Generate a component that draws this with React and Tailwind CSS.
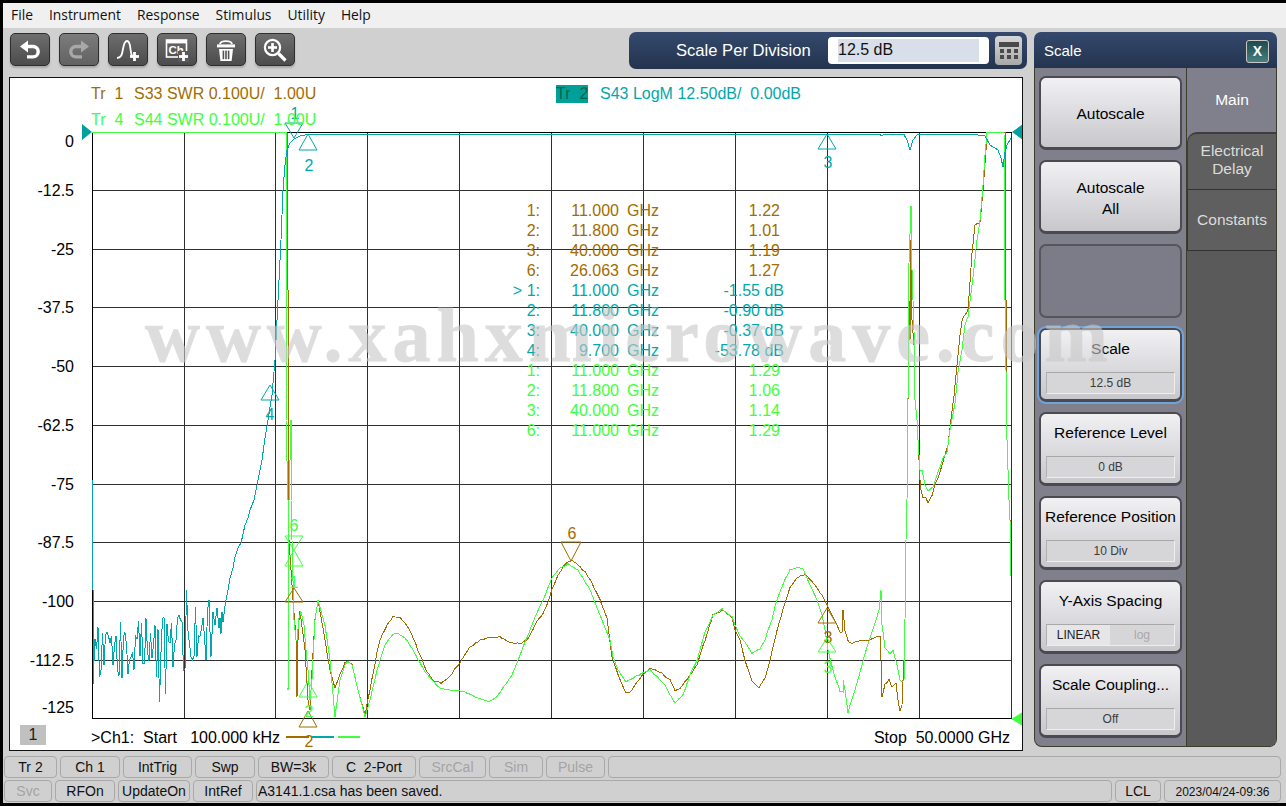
import React from 'react';

const BROWN = '#a26c00', TEAL = '#00a8ac', GREEN = '#40ff40';
const GX = [92, 184, 275, 367, 459, 551, 643, 735, 827, 919, 1011];
const GY = [132, 190, 249, 307, 366, 425, 484, 542, 601, 660, 718];
const AXIS = [['0', 141], ['-12.5', 190], ['-25', 249], ['-37.5', 307], ['-50', 366], ['-62.5', 425], ['-75', 484], ['-87.5', 542], ['-100', 601], ['-112.5', 660], ['-125', 707]];

function rng(seed) {
  let s = seed;
  return () => {
    s = (s * 16807) % 2147483647;
    return (s - 1) / 2147483646;
  };
}
function rough(pts, seed, amt) {
  const r = rng(seed);
  const out = [];
  for (let i = 0; i < pts.length - 1; i++) {
    const [x0, y0] = pts[i];
    const [x1, y1] = pts[i + 1];
    const n = Math.max(1, Math.floor(Math.abs(x1 - x0) / 2));
    const gentle = Math.abs(x1 - x0) >= 3 && y0 !== y1;
    for (let k = 0; k < n; k++) {
      const t = k / n;
      const j = gentle ? (r() - 0.5) * amt : 0;
      out.push([x0 + (x1 - x0) * t, y0 + (y1 - y0) * t + j]);
    }
  }
  out.push(pts[pts.length - 1]);
  return out;
}
const str = (p) => p.map(([x, y]) => `${x.toFixed(1)},${y.toFixed(1)}`).join(' ');

function tealTrace() {
  const r = rng(4711);
  const p = [[93, 590], [93, 684]];
  for (let x = 95; x < 211; x += 1.5) {
    const shift = x > 170 ? (x - 170) * 0.4 : 0;
    const spike = r();
    const big = r();
    let y = 648 - shift + (r() - 0.5) * 62;
    if (spike > 0.88) y += 18 + big * 24;
    if (spike < 0.12) y -= 8 + big * 16;
    p.push([x, y]);
  }
  p.push([211, 657], [213, 612], [215, 625], [217, 608], [219, 628], [220, 618], [221, 634], [222, 612], [223, 622], [225, 606], [226, 600],
    [228, 590], [230, 578], [233, 568], [235, 557], [238, 548], [241, 543], [245, 525], [248, 518], [250, 510], [254, 500], [258, 480], [262, 460], [265, 438], [268, 420], [272, 395], [275, 360], [278, 300], [281, 240], [283, 190], [285, 165], [287, 150], [290, 143], [294, 139], [300, 136], [305, 135], [362, 134.5],
    [880, 134.5], [882, 136], [884, 134.5], [904, 134.5], [907, 140], [910, 150], [913, 140], [917, 135], [920, 134.5], [975, 134.5], [985, 136], [990, 145], [998, 150], [1001, 158], [1003, 167], [1005, 152], [1007, 145], [1011, 138]);
  return p;
}

const BROWN_PTS = [[287, 132.5], [287, 280], [288, 290], [288, 440], [289, 540], [291, 570], [293, 600], [295, 625], [296, 640], [297, 697], [298, 640], [299, 620], [300, 612], [305, 650], [308, 700], [310, 710], [312, 670], [315, 620], [318, 600], [325, 640], [330, 670], [335, 687], [340, 675], [345, 662], [348, 661], [352, 665], [358, 690], [365, 715], [370, 690], [377, 653], [380, 640], [387, 625], [393, 617], [400, 618], [405, 623], [412, 635], [420, 655], [427, 672], [435, 682], [441, 683], [450, 676], [460, 662], [470, 647], [480, 640], [490, 637], [500, 637], [510, 642], [520, 644], [527, 640], [535, 625], [545, 610], [552, 590], [558, 575], [566, 563], [572, 561], [580, 567], [585, 572], [592, 583], [600, 600], [607, 618], [612, 657], [618, 675], [626, 693], [630, 692], [640, 678], [650, 668], [655, 670], [660, 672], [670, 680], [675, 690], [680, 688], [687, 680], [697, 665], [705, 640], [713, 615], [722, 610], [732, 617], [735, 630], [740, 640], [745, 660], [752, 682], [759, 688], [765, 678], [770, 660], [777, 630], [785, 603], [790, 588], [797, 578], [805, 574], [815, 585], [822, 595], [827, 605], [832, 615], [837, 625], [840, 632], [842, 632], [843, 610], [845, 630], [848, 640], [852, 644], [860, 640], [868, 640], [875, 638], [880, 636], [881, 660], [882, 697], [885, 685], [889, 680], [892, 687], [896, 683], [898, 700], [900, 711], [902, 705], [903, 680], [904, 660], [905, 620], [906, 540], [907, 500], [908, 400], [909, 300], [910, 340], [911, 240], [912, 320], [914, 345], [915, 400], [917, 420], [918, 440], [919, 460], [920, 480], [921, 490], [923, 497], [926, 498], [928, 503], [932, 495], [935, 485], [938, 478], [942, 465], [945, 455], [948, 445], [951, 420], [954, 395], [957, 365], [960, 335], [962, 320], [968, 310], [972, 253], [975, 225], [980, 222], [983, 190], [986, 150], [987, 132.5], [1005, 132.5], [1005, 272], [1006, 300], [1006, 370], [1007, 440], [1009, 500], [1010, 520], [1010, 570]];

const GREEN_PTS = [[92, 132.5], [286, 132.5], [286, 420], [288, 500], [288, 690], [289, 500], [291, 420], [291, 500], [292, 540], [294, 620], [296, 640], [297, 640], [299, 618], [301, 612], [304, 625], [306, 650], [308, 670], [310, 700], [312, 680], [315, 620], [318, 600], [325, 625], [330, 660], [335, 717], [340, 680], [345, 665], [348, 662], [352, 665], [358, 690], [365, 717], [370, 700], [377, 670], [380, 660], [385, 645], [393, 634], [397, 633], [405, 638], [412, 648], [420, 663], [425, 672], [433, 681], [440, 688], [450, 690], [458, 690], [465, 692], [475, 697], [487, 701], [490, 701], [497, 697], [505, 685], [512, 675], [520, 655], [528, 635], [535, 617], [543, 600], [552, 578], [560, 568], [568, 564], [578, 570], [590, 590], [600, 615], [610, 640], [613, 657], [618, 670], [626, 682], [635, 677], [645, 672], [650, 670], [658, 678], [665, 685], [672, 698], [675, 703], [683, 695], [690, 675], [697, 660], [705, 632], [713, 615], [722, 609], [732, 617], [735, 625], [740, 636], [747, 645], [752, 653], [760, 649], [765, 640], [768, 630], [772, 620], [775, 606], [780, 592], [785, 580], [790, 570], [797, 567], [803, 569], [810, 585], [817, 600], [822, 615], [825, 630], [828, 650], [833, 670], [836, 680], [840, 691], [843, 692], [843, 680], [845, 690], [848, 713], [850, 705], [855, 690], [860, 672], [867, 647], [875, 623], [879, 610], [881, 590], [882, 625], [885, 648], [890, 653], [893, 650], [897, 665], [900, 680], [902, 682], [904, 680], [905, 620], [906, 540], [907, 500], [908, 400], [909, 263], [911, 206], [911, 263], [912, 270], [914, 330], [915, 400], [917, 420], [918, 440], [920, 470], [922, 470], [925, 485], [928, 491], [933, 487], [938, 472], [943, 458], [947, 452], [950, 430], [955, 403], [958, 372], [962, 350], [965, 325], [968, 317], [972, 285], [974, 268], [977, 240], [980, 220], [983, 185], [985, 155], [987, 132.5], [1004, 132.5], [1005, 300], [1006, 370], [1007, 440], [1009, 500], [1010, 520], [1011, 576]];

function Tri({ x, y, dir = 'up', color, w = 9, h = 16 }) {
  const by = dir === 'up' ? y + h : y - h;
  return <polygon points={`${x},${y} ${x - w},${by} ${x + w},${by}`} fill="none" stroke={color} strokeWidth="1" />;
}
function Lab({ x, y, color, children }) {
  return <text x={x} y={y} textAnchor="middle" fontSize="16" fill={color} fontFamily="'Liberation Sans', Arial, sans-serif">{children}</text>;
}

function Chart() {
  return (
    <svg className="absolute inset-0 w-full h-full" viewBox="10 78 1012 672">
      <g stroke="#303030" strokeWidth="1" shapeRendering="crispEdges">
        {GX.map((x) => <line key={x} x1={x + 0.5} x2={x + 0.5} y1="132" y2="719" />)}
        {GY.map((y) => <line key={y} x1="92" x2="1012" y1={y + 0.5} y2={y + 0.5} />)}
        <line x1="92" x2="1012" y1="132.5" y2="132.5" stroke="#000" />
        <line x1="92" x2="1012" y1="718.5" y2="718.5" stroke="#000" />
        <line x1="92.5" x2="92.5" y1="132" y2="719" stroke="#000" />
      </g>
      <line x1="92.5" x2="92.5" y1="480" y2="590" stroke={TEAL} shapeRendering="crispEdges" />
      <g fill="none" strokeWidth="1" shapeRendering="crispEdges">
        <polyline points={str(rough(BROWN_PTS, 77, 1.6))} stroke={BROWN} />
        <polyline points={str(rough(GREEN_PTS, 191, 1))} stroke={GREEN} />
        <polyline points={str(tealTrace())} stroke={TEAL} />
      </g>
      <polygon points="82,124 92,132 82,140" fill="#00a0a0" />
      <polygon points="1023,124 1012,132 1023,140" fill="#00a0a0" />
      <polygon points="1023,712 1011,719 1023,726" fill={GREEN} />

      <Tri x={294} y={138} dir="down" color={TEAL} w={9} h={15} />
      <Lab x={295} y={119} color={TEAL}>1</Lab>
      <Tri x={308} y={134} color={TEAL} h={16} />
      <Lab x={309} y={171} color={TEAL}>2</Lab>
      <Tri x={827} y={134} color={TEAL} h={15} />
      <Lab x={828} y={168} color={TEAL}>3</Lab>
      <Tri x={270} y={385} color={TEAL} h={15} />
      <Lab x={270} y={420} color={TEAL}>4</Lab>

      <Tri x={571} y={561} dir="down" color={BROWN} w={10} h={19} />
      <Lab x={572} y={539} color={BROWN}>6</Lab>
      <Tri x={294} y={588} color={BROWN} h={14} />
      <Tri x={308} y={711} color={BROWN} h={16} />
      <Lab x={309} y={747} color={BROWN}>2</Lab>
      <Tri x={827} y={608} color={BROWN} h={15} />
      <Lab x={828} y={643} color={BROWN}>3</Lab>

      <Tri x={294} y={550} dir="down" color={GREEN} h={14} />
      <Lab x={294} y={531} color={GREEN}>6</Lab>
      <Tri x={294} y={550} color={GREEN} h={16} />
      <Lab x={294} y={588} color={GREEN}>1</Lab>
      <Tri x={308} y={681} color={GREEN} h={16} />
      <Lab x={309} y={717} color={GREEN}>2</Lab>
      <Tri x={827} y={638} color={GREEN} h={14} />
      <Lab x={828} y={673} color={GREEN}>3</Lab>

      {AXIS.map(([t, y]) => (
        <text key={t} x="74" y={y + 6} textAnchor="end" fontSize="16" fill="#000" fontFamily="'Liberation Sans', Arial, sans-serif">{t}</text>
      ))}
    </svg>
  );
}

const MARKERS = [
  ['1:', '11.000', '1.22', BROWN], ['2:', '11.800', '1.01', BROWN], ['3:', '40.000', '1.19', BROWN], ['6:', '26.063', '1.27', BROWN],
  ['> 1:', '11.000', '-1.55 dB', TEAL], ['2:', '11.800', '-0.90 dB', TEAL], ['3:', '40.000', '-0.37 dB', TEAL], ['4:', '9.700', '-53.78 dB', TEAL],
  ['1:', '11.000', '1.29', GREEN], ['2:', '11.800', '1.06', GREEN], ['3:', '40.000', '1.14', GREEN], ['6:', '11.000', '1.29', GREEN],
];

function MarkerTable() {
  return (
    <div className="absolute left-[500px] top-[123px] flex flex-col">
      {MARKERS.map(([n, f, v, c], i) => (
        <div key={i} className="flex h-[20px] leading-[20px] text-[16px] whitespace-pre" style={{ color: c }}>
          <span className="w-[30px] text-right">{n}</span>
          <span className="w-[79px] text-right">{f}</span>
          <span className="w-[41px] ml-[8px]">GHz</span>
          <span className={v.includes('dB') ? 'w-[116px] text-right' : 'w-[112px] text-right'}>{v}</span>
        </div>
      ))}
    </div>
  );
}

const IconWrap = ({ children }) => <svg width="24" height="24" viewBox="0 0 24 24">{children}</svg>;

const UndoIcon = ({ c = '#fff' }) => (
  <IconWrap>
    <path d="M8 8.5H15a5.2 5.2 0 0 1 0 10.4H9" fill="none" stroke={c} strokeWidth="3.4" />
    <polygon points="2,8.5 10,2.5 10,14.5" fill={c} />
  </IconWrap>
);
const RedoIcon = ({ c = '#a8a8a8' }) => (
  <IconWrap>
    <path d="M16 8.5H9a5.2 5.2 0 0 0 0 10.4H15" fill="none" stroke={c} strokeWidth="3.4" />
    <polygon points="22,8.5 14,2.5 14,14.5" fill={c} />
  </IconWrap>
);
const Plus = ({ x, y }) => (
  <g>
    <rect x={x - 4.5} y={y - 1.4} width="9" height="2.8" fill="#fff" />
    <rect x={x - 1.4} y={y - 4.5} width="2.8" height="9" fill="#fff" />
  </g>
);
const MarkerIcon = () => (
  <IconWrap>
    <path d="M1 20C5 20 6 17 7 11C8 5 9 3 11 3C13 3 14 6 14.5 11C15 15 15.5 17 16 18" fill="none" stroke="#fff" strokeWidth="1.8" />
    <Plus x={18.5} y={18.5} />
  </IconWrap>
);
const ChIcon = () => (
  <IconWrap>
    <rect x="1.5" y="2" width="20" height="17" fill="none" stroke="#fff" strokeWidth="1.6" />
    <rect x="1.5" y="2" width="20" height="3.4" fill="#fff" />
    <text x="3.4" y="16" fontSize="11.5" fontWeight="700" fill="#fff" fontFamily="'Liberation Sans', sans-serif">Ch</text>
    <rect x="13" y="13" width="11" height="11" fill="#5a5a5a" />
    <Plus x={18.5} y={18.5} />
  </IconWrap>
);
const TrashIcon = () => (
  <IconWrap>
    <path d="M6 6.2C6.5 2 17.5 2 18 6.2" fill="none" stroke="#fff" strokeWidth="1.8" />
    <rect x="3" y="6.4" width="18" height="3" fill="#fff" />
    <path d="M5 11H19L17.6 23H6.4Z" fill="#fff" />
    <rect x="8.6" y="12.6" width="1.6" height="8.6" fill="#555" />
    <rect x="11.2" y="12.6" width="1.6" height="8.6" fill="#555" />
    <rect x="13.8" y="12.6" width="1.6" height="8.6" fill="#555" />
  </IconWrap>
);
const ZoomIcon = () => (
  <IconWrap>
    <circle cx="9.5" cy="9.5" r="7.6" fill="none" stroke="#fff" strokeWidth="2.2" />
    <rect x="5" y="8.2" width="9" height="2.6" fill="#fff" />
    <rect x="8.2" y="5" width="2.6" height="9" fill="#fff" />
    <path d="M15.5 15.5L22.5 22.5" stroke="#fff" strokeWidth="3.2" />
  </IconWrap>
);

function ToolBtn({ children, disabled }) {
  return (
    <button className={`w-[40px] h-[33px] flex items-center justify-center rounded-[5px] border-[1.5px] border-[#2e2e2e] shadow-[0_2px_2px_#a8a8a8] ${disabled ? 'bg-linear-to-b from-[#7c7c7c] to-[#626262]' : 'bg-linear-to-b from-[#6e6e6e] to-[#4c4c4c]'}`}>
      {children}
    </button>
  );
}

function ValueBox({ children, toggle }) {
  if (toggle) {
    return (
      <div className="mx-[5px] mb-[5px] h-[22px] flex text-[12px] leading-[20px] border border-t-[#a8a8a8] border-l-[#b0b0b0] border-r-[#eeeeee] border-b-[#eeeeee] bg-[#d6d6d8]">
        <span className="w-[63px] bg-[#e6e6e8] text-center text-[#222]">LINEAR</span>
        <span className="flex-1 text-center text-[#a8a8a8]">log</span>
      </div>
    );
  }
  return (
    <div className="mx-[5px] mb-[5px] h-[22px] text-center text-[12px] leading-[20px] text-[#3c3c3c] border border-t-[#a8a8a8] border-l-[#b0b0b0] border-r-[#eeeeee] border-b-[#eeeeee] bg-[#d6d6d8]">
      {children}
    </div>
  );
}

function SideBtn({ lines, value, toggle, active, blank }) {
  if (blank) {
    return <div className="h-[74px] rounded-[7px] border-2 border-[#55555c] bg-[#7b7c88]" />;
  }
  const hasValue = value || toggle;
  return (
    <button className={`h-[74px] flex flex-col rounded-[7px] border-2 border-[#4a4a50] border-b-[3px] bg-linear-to-b from-[#f1f1f4] to-[#c8c8cc] text-black text-[15.5px] leading-[21px] ${active ? 'outline-2 outline-[#6fa3dc]' : ''}`}>
      <span className={`flex-1 flex flex-col items-center justify-center ${hasValue ? 'pb-[6px]' : 'pt-[2px]'}`}>
        {lines.map((l) => <span key={l} className="whitespace-nowrap">{l}</span>)}
      </span>
      {hasValue && <ValueBox toggle={toggle}>{value}</ValueBox>}
    </button>
  );
}

function Stat({ w, children, off, left, flex }) {
  return (
    <div
      className={`h-[22px] shrink-0 rounded-[4px] border border-[#a9a9a9] text-[14px] leading-[20px] whitespace-pre ${left ? 'pl-[1px] text-left' : 'text-center'} ${off ? 'text-[#a4a4a4]' : 'text-[#111]'} ${flex ? 'flex-1' : ''}`}
      style={w ? { width: w } : undefined}
    >
      {children}
    </div>
  );
}

export default function App() {
  return (
    <div className="relative w-[1286px] h-[806px] overflow-hidden bg-black pt-[3px] pl-[3px] pb-[3px] font-['Liberation_Sans',Arial,sans-serif]">
      <div className="h-full flex flex-col bg-[#d0d0d0]">
        <div className="h-[25px] bg-[#f0f0f0] flex items-center gap-4 pl-[8px] text-[13.85px] text-[#111] font-['Open_Sans',sans-serif]">
          <span>File</span><span>Instrument</span><span>Response</span><span>Stimulus</span><span>Utility</span><span>Help</span>
        </div>

        <div className="h-[725px] flex">
          <div className="w-[1026px] flex flex-col">
            <div className="h-[49px] flex items-start pl-[7px] pr-[2px] pt-[4px]">
              <div className="flex gap-[9px] mt-[1px]">
                <ToolBtn><UndoIcon /></ToolBtn>
                <ToolBtn disabled><RedoIcon /></ToolBtn>
                <ToolBtn><MarkerIcon /></ToolBtn>
                <ToolBtn><ChIcon /></ToolBtn>
                <ToolBtn><TrashIcon /></ToolBtn>
                <ToolBtn><ZoomIcon /></ToolBtn>
              </div>
              <div className="ml-auto w-[398px] h-[37px] rounded-[7px] bg-linear-to-b from-[#34496d] to-[#24344f] flex items-center text-white text-[16.6px]">
                <span className="ml-[47px] w-[152px] whitespace-nowrap pt-[1px]">Scale Per Division</span>
                <div className="w-[161px] h-[27px] rounded-[4px] bg-white p-[2px] pl-[10px] pr-[10px]">
                  <div className="h-full bg-[#d8dfea] text-[#111] text-[16px] leading-[21px]">12.5 dB</div>
                </div>
                <div className="ml-[6px] w-[27px] h-[29px] rounded-[4px] bg-linear-to-b from-[#d8d8d8] to-[#a8a8a8] flex flex-col items-center justify-center gap-[2px]">
                  <div className="w-[20px] h-[5px] bg-[#4a4a4a]" />
                  {[0, 1].map((r) => (
                    <div key={r} className="flex gap-[3px]">
                      <div className="w-[4px] h-[4px] bg-[#4a4a4a]" />
                      <div className="w-[4px] h-[4px] bg-[#4a4a4a]" />
                      <div className="w-[4px] h-[4px] bg-[#4a4a4a]" />
                    </div>
                  ))}
                </div>
              </div>
            </div>

            <div className="relative ml-[6px] w-[1014px] h-[674px] bg-white border border-[#111] flex flex-col justify-between text-[16px]">
              <Chart />
              <MarkerTable />
              <div className="relative pl-[81px] pt-[3px] whitespace-pre">
                <div className="flex h-[26px] items-center">
                  <span className="flex w-[465px]" style={{ color: BROWN }}><span className="w-[43px]">Tr  1</span><span>S33 SWR 0.100U/  1.00U</span></span>
                  <span className="w-[32px] h-[18px] leading-[18px] bg-[#00a09a] text-[#064]">Tr  2</span>
                  <span className="ml-[12px]" style={{ color: TEAL }}>S43 LogM 12.50dB/  0.00dB</span>
                </div>
                <div className="flex h-[26px] items-center" style={{ color: GREEN }}><span className="w-[43px]">Tr  4</span><span>S44 SWR 0.100U/  1.00U</span></div>
              </div>
              <div className="relative flex items-start pl-[10px] pr-[12px] pb-[2px] whitespace-pre text-black">
                <span className="w-[26px] h-[20px] bg-[#c0c0c0] text-center leading-[20px] text-[#222]">1</span>
                <span className="ml-[45px] mt-[3px] leading-[20px]">&gt;Ch1:  Start   100.000 kHz</span>
                <span className="ml-[6px] mt-[11px] w-[23px] h-[2px]" style={{ background: BROWN }} />
                <span className="ml-[3px] mt-[11px] w-[22px] h-[2px]" style={{ background: TEAL }} />
                <span className="ml-[4px] mt-[11px] w-[22px] h-[2px]" style={{ background: GREEN }} />
                <span className="ml-auto mt-[3px] leading-[20px]">Stop  50.0000 GHz</span>
              </div>
            </div>
          </div>

          <div className="ml-[5px] mt-[4px] w-[243px] h-[715px] flex flex-col">
            <div className="h-[36px] rounded-t-[7px] bg-linear-to-b from-[#34496d] to-[#24344f] flex items-center justify-between pl-[10px] pr-[8px] pt-[2px] text-white text-[15px]">
              <span>Scale</span>
              <div className="w-[23px] h-[23px] rounded-[3px] border border-[#c8c8c8] bg-linear-to-b from-[#1f4a4e] to-[#46807f] flex items-center justify-center text-[14px] font-bold leading-none">X</div>
            </div>
            <div className="flex-1 flex rounded-b-[8px] overflow-hidden border border-t-0 border-[#3d3d2d] bg-[#7f808c]">
              <div className="w-[152px] shrink-0 flex flex-col gap-[10px] pl-[4px] pr-[4px] pt-[8px] border-r border-[#3d3d2d]">
                <SideBtn lines={['Autoscale']} />
                <SideBtn lines={['Autoscale', 'All']} />
                <SideBtn blank />
                <SideBtn lines={['Scale']} value="12.5 dB" active />
                <SideBtn lines={['Reference Level']} value="0 dB" />
                <SideBtn lines={['Reference Position']} value="10 Div" />
                <SideBtn lines={['Y-Axis Spacing']} toggle />
                <SideBtn lines={['Scale Coupling...']} value="Off" />
              </div>
              <div className="flex-1 flex flex-col text-center text-[15.5px] leading-[18px]">
                <div className="h-[64px] flex items-center justify-center text-white pl-[1px]">Main</div>
                <div className="h-[57px] pb-[4px] rounded-tl-[10px] border-l border-t-2 border-[#3d3d3d] bg-[#5f5f5f] text-[#dcdcdc] flex flex-col items-center justify-center">
                  <span>Electrical</span><span>Delay</span>
                </div>
                <div className="h-[61px] border-t border-l border-[#333] bg-[#5f5f5f] text-[#dcdcdc] flex items-center justify-center">Constants</div>
                <div className="flex-1 border-t border-[#333] bg-[#5a5a5a]" />
              </div>
            </div>
          </div>
        </div>

        <div className="mt-[3px] pl-[1px] pr-[5px] flex flex-col gap-[2px]">
          <div className="flex gap-[3px]">
            <Stat w={53}>Tr 2</Stat>
            <Stat w={60}>Ch 1</Stat>
            <Stat w={69}>IntTrig</Stat>
            <Stat w={60}>Swp</Stat>
            <Stat w={71}>BW=3k</Stat>
            <Stat w={84}>C  2-Port</Stat>
            <Stat w={67} off>SrcCal</Stat>
            <Stat w={54} off>Sim</Stat>
            <Stat w={59} off>Pulse</Stat>
            <Stat flex> </Stat>
          </div>
          <div className="flex gap-[3px]">
            <Stat w={48} off>Svc</Stat>
            <Stat w={60}>RFOn</Stat>
            <Stat w={72}>UpdateOn</Stat>
            <Stat w={60}>IntRef</Stat>
            <Stat flex left>A3141.1.csa has been saved.</Stat>
            <Stat w={46}>LCL</Stat>
            <Stat w={117}><span className="text-[12px]">2023/04/24-09:36</span></Stat>
          </div>
        </div>
      </div>

      <div className="absolute left-[145px] top-[297px] pointer-events-none whitespace-nowrap font-['Liberation_Serif',serif] font-bold text-[76px] leading-[76px] tracking-[6px] text-[#c8c8c8] opacity-60 [-webkit-text-stroke:0.8px_#c8c8c8]">
        www.xahxmicrowave.com
      </div>
    </div>
  );
}
